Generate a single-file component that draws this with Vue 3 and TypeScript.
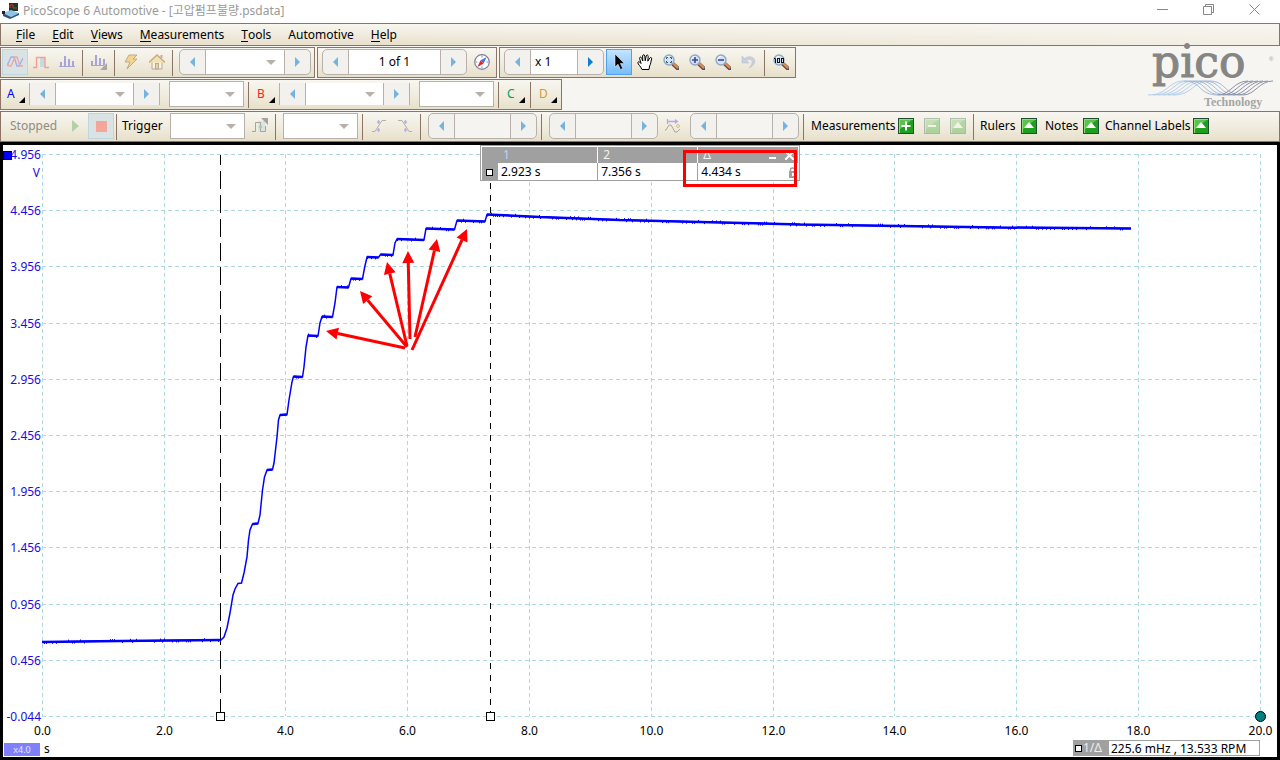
<script setup lang="ts">
import { computed, onBeforeUnmount, onMounted, ref } from 'vue'

interface Item {
  k: 'btn' | 'sep' | 'spin' | 'sel' | 'chan' | 'label'
  icon?: string
  text?: string
  cls?: string
  field?: 'select' | 'input'
  value?: string
}

const menus: [string, string][] = [
  ['F', 'ile'], ['E', 'dit'], ['V', 'iews'], ['M', 'easurements'],
  ['T', 'ools'], ['', 'Automotive'], ['H', 'elp'],
]

const lens = (inner: string) => `
  <path d="M9.6 9.6 L14.6 14.2" stroke="#5a4a5a" stroke-width="4" stroke-linecap="round"/>
  <path d="M9.8 9.2 L14.4 13.4" stroke="#e8893c" stroke-width="2.4" stroke-linecap="round"/>
  <circle cx="6" cy="6" r="5" fill="#cfe4f5" stroke="#8fa9c4" stroke-width="1.4"/>
  <path d="M2.6 5.4 A3.6 3.6 0 0 1 6 2.4" stroke="#fff" fill="none"/>${inner}`

const green = (inner: string) => `
  <rect x=".5" y=".5" width="15" height="15" fill="#1ea01e" stroke="#1f4d38"/>
  <path d="M1 1 H15 L1 12 Z" fill="#5cc34a"/>
  <path d="M1.5 15 V1.5 H15" stroke="#8fdc7c" fill="none"/>${inner}`

const icons: Record<string, string> = {
  wave: '<path d="M0 12 L4 3 H7 L10 12 H12 L16 4" stroke="#a3ade6" fill="none" stroke-width="1.3"/><path d="M0 9 L2 12 H4 L8 3 H10 L13 12 H16" stroke="#f0a8a2" fill="none" stroke-width="1.5"/>',
  step: '<rect x="7" y="4" width="5" height="9" fill="#c3dce0"/><path d="M0 13.5 H3.5 V3.5 H12 V13.5 H16" stroke="#f3a097" fill="none" stroke-width="1.4"/>',
  bars: '<path d="M0 12.5 H16" stroke="#a9a4d8"/><path d="M2 12 V8 M6 12 V2 M10 12 V5 M14 12 V7" stroke="#a9a4d8" stroke-width="2"/>',
  barsMenu: '<path d="M0 11.5 H13" stroke="#a9a4d8"/><path d="M1 11 V7 M5 11 V1 M9 11 V4 M13 11 V5" stroke="#a9a4d8" stroke-width="2"/><path d="M16 9 V16 H9 Z" fill="#aaa7a2"/>',
  bolt: '<path d="M6 1 L14 1 L10 5 H14 L4 15 L7 8 H2 Z" fill="#f3d58b" stroke="#b9ab92"/>',
  home: '<path d="M3 8 V15 H13 V8" fill="#f6f1e6" stroke="#b9ab92"/><path d="M0 8.5 L8 1 L16 8.5" fill="#f3e2ad" stroke="#c2ab80" stroke-width="1.3"/><rect x="6.5" y="9.5" width="3" height="5.5" fill="#e4d0a0" stroke="#b9ab92"/><path d="M12.5 1 V4" stroke="#d9a58f" stroke-width="2"/>',
  compass: '<circle cx="8" cy="8" r="7.3" fill="#fff" stroke="#7d7da5" stroke-width="1.2"/><path d="M8 1.5V3.5M8 12.5V14.5M1.5 8H3.5M12.5 8H14.5" stroke="#8888aa"/><path d="M12.6 3 L9.6 9.4 L6.4 6.6 Z" fill="#3e73e6"/><path d="M3.4 13 L6.4 6.6 L9.6 9.4 Z" fill="#e3242b"/>',
  cursor: '<path d="M4 0 V13 L7 10.2 L9.4 15.5 L11.8 14.4 L9.4 9.4 H13.4 Z" fill="#000" stroke="#dfeeff" stroke-width=".6"/>',
  hand: '<path d="M5 15.5 C3.5 12 1 10.5 .8 8.6 C1.2 7 3 8 4 9.5 L2.6 4.4 C2.6 2.6 4.2 2.8 4.7 4.2 L5.8 7 L5.6 2 C5.8 .2 7.6 .4 7.8 2 L8.2 6.8 L9.2 2 C9.8 .4 11.4 .9 11.2 2.6 L10.8 7.2 L12.8 4 C13.6 2.8 15 3.6 14.6 5 C13.8 8 13.8 10 12.6 12 L12 15.5 Z" fill="#fff" stroke="#000"/>',
  zoomBox: lens('<path d="M3.5 5 V3.5 H5 M7 3.5 H8.5 V5 M8.5 7 V8.5 H7 M5 8.5 H3.5 V7" stroke="#33506f" fill="none"/>'),
  zoomIn: lens('<path d="M3 6 H9 M6 3 V9" stroke="#4a3fa5" stroke-width="1.6"/>'),
  zoomOut: lens('<path d="M3 6 H9" stroke="#4a3fa5" stroke-width="1.6"/>'),
  zoom100: lens('<path d="M1 4.5 H2.5 V9" stroke="#111" fill="none"/><rect x="4.5" y="4.5" width="2" height="4" stroke="#111"/><rect x="8.5" y="4.5" width="2" height="4" stroke="#111"/>'),
  undo: '<path d="M1 2 V9 H8 L5.5 6.5 C9 4 12 6 11 9 C10.6 11 9.4 12.5 8 14 C12.5 12 15 8.5 13.5 5.5 C11.5 2 7 2 3.6 4.5 Z" fill="#c9d0dc" stroke="#b9c2d0" stroke-width=".6"/>',
  play: '<path d="M5 2 L12 8 L5 14 Z" fill="#b3d0a6"/>',
  stop: '<rect x="3" y="3" width="11" height="11" fill="#f4a69a"/>',
  pulse: '<rect x="6" y="3" width="7" height="11" fill="#dce3e2"/><path d="M0 13.5 H3.5 V4.5 H8.5 V13.5 H13.5 V8" stroke="#a5a39b" fill="none"/><circle cx="8.5" cy="9" r="1.8" fill="#9fd69a"/><path d="M9 0 H16 V7 Z" fill="#a5a39b"/>',
  rise: '<path d="M1 13.5 H4 L11 2.5 H15" stroke="#b5b0a6" fill="none"/><path d="M7.5 2 V6 M7.5 10 V14 M6 4 H9 M6 12 H9" stroke="#b6b0ee" stroke-width="1.3"/>',
  fall: '<path d="M1 2.5 H5 L12 13.5 H15" stroke="#b5b0a6" fill="none"/><path d="M8.5 2 V6 M8.5 10 V14 M7 4 H10 M7 12 H10" stroke="#b6b0ee" stroke-width="1.3"/>',
  advance: '<path d="M0 12 L1 12 L4 7 H6 L10 14 H12 L15 11" stroke="#a9a69d" fill="none"/><path d="M2.5 3.5 H11 M2.5 1 V6" stroke="#b0aaea" fill="none" stroke-width="1.3"/><path d="M10 1 L13.5 3.5 L10 6 Z" fill="#b0aaea"/><path d="M13 6 L15 8 L13 10 L11 8 Z" fill="#efe39a" stroke="#bdb7a5" stroke-width=".7"/>',
  plus: green('<path d="M8 3.5 V12.5 M3.5 8 H12.5" stroke="#fff" stroke-width="2"/>'),
  minus: green('<path d="M4 8 H12" stroke="#fff" stroke-width="2"/>'),
  up: green('<path d="M8 4 L13 10 H3 Z" fill="#fff"/>'),
}

const sep: Item = { k: 'sep' }
const btn = (icon: string, text: string, cls = ''): Item => ({ k: 'btn', icon, text, cls })

const topGroups: Item[][] = [
  [
    btn('wave', 'Scope mode', 'lit'), btn('step', 'Persistence mode'), btn('bars', 'Spectrum mode'), sep,
    btn('barsMenu', 'Spectrum options'), sep, btn('bolt', 'Auto setup'), btn('home', 'Home'), sep,
    { k: 'spin', field: 'select', text: 'Timebase', cls: 'w-timebase' },
  ],
  [
    { k: 'spin', field: 'input', value: '1 of 1', text: 'Buffer', cls: 'w-buffer center' },
    btn('compass', 'Buffer navigator'),
  ],
  [
    { k: 'spin', field: 'input', value: 'x 1', text: 'Zoom factor', cls: 'w-zoom' },
    btn('cursor', 'Select', 'active'), btn('hand', 'Pan'), btn('zoomBox', 'Zoom to area'),
    btn('zoomIn', 'Zoom in'), btn('zoomOut', 'Zoom out'), btn('undo', 'Undo zoom'), sep, btn('zoom100', 'Zoom 100%'),
  ],
]

const channelItems: Item[] = [
  { k: 'chan', text: 'A', cls: 'ch-a' },
  { k: 'spin', field: 'select', text: 'Channel A range', cls: 'w-range flat' },
  { k: 'sel', text: 'Channel A coupling' }, sep,
  { k: 'chan', text: 'B', cls: 'ch-b' },
  { k: 'spin', field: 'select', text: 'Channel B range', cls: 'w-range flat' },
  { k: 'sel', text: 'Channel B coupling' }, sep,
  { k: 'chan', text: 'C', cls: 'ch-c' }, sep,
  { k: 'chan', text: 'D', cls: 'ch-d' },
]

const triggerItems: Item[] = [
  { k: 'label', text: 'Stopped', cls: 'l-stopped' }, btn('play', 'Start'), btn('stop', 'Stop', 'lit'), sep,
  { k: 'label', text: 'Trigger', cls: 'l-trigger' }, { k: 'sel', text: 'Trigger mode' },
  btn('pulse', 'Advanced triggers'), sep,
  { k: 'sel', text: 'Trigger channel' }, sep, btn('rise', 'Rising edge'), btn('fall', 'Falling edge'), sep,
  { k: 'spin', field: 'input', value: '', text: 'Threshold', cls: 'w-level blank' }, sep,
  { k: 'spin', field: 'input', value: '', text: 'Pre-trigger', cls: 'w-level blank' },
  btn('advance', 'Post-trigger delay'),
  { k: 'spin', field: 'input', value: '', text: 'Delay', cls: 'w-level blank' }, sep,
  { k: 'label', text: 'Measurements', cls: 'l-measure' },
  btn('plus', 'Add measurement'), btn('minus', 'Delete measurement', 'dim'), btn('up', 'Edit measurement', 'dim'), sep,
  { k: 'label', text: 'Rulers', cls: 'l-rulers' }, btn('up', 'Show rulers'),
  { k: 'label', text: 'Notes', cls: 'l-notes' }, btn('up', 'Show notes'),
  { k: 'label', text: 'Channel Labels', cls: 'l-labels' }, btn('up', 'Show channel labels'),
]

const bars = [
  { id: 'top', groups: topGroups },
  { id: 'channels', groups: [channelItems] },
  { id: 'trigger', groups: [triggerItems] },
]

/* Samples are stored on a 1218 x 562 capture grid whose origin is (42, 154). */
const GRID = { x: 42, y: 154, w: 1218, h: 562 }
const PAD = { left: 39, right: 17, top: 9, bottom: 41 }

const samples: [number, number][] = [
  [42, 642], [80, 641.5], [120, 641], [170, 640.5], [221, 640], [224, 637], [227, 628], [230, 613], [233, 595],
  [235, 589], [238, 583.5], [241.5, 583], [244, 573], [247, 557], [248.5, 540], [250, 530], [252.5, 524],
  [258, 523.5], [260, 515], [262.5, 490], [264.5, 477], [267, 470], [272.5, 469.5], [274, 463], [277, 437],
  [278.5, 420], [280, 415], [287, 414.5], [289, 400], [292, 382], [293.5, 376.5], [302.5, 377], [304, 367],
  [306, 347], [308, 335.5], [318, 336], [320, 323], [322, 316.5], [332.5, 317], [335, 303], [337, 287],
  [348.5, 287.5], [351, 278.5], [362.5, 279], [364.5, 268], [367, 257], [378.5, 257.5], [380.5, 254.5],
  [393, 255], [395, 243], [397, 239], [424, 240], [426, 228.5], [454.5, 229.5], [457, 220.5], [485, 221.5],
  [487, 214.5], [540, 217], [620, 220], [700, 222], [800, 224.5], [900, 226], [1000, 227.5], [1131, 228.5],
]

const arrows = [
  [405, 348, 326, 331], [407, 347, 360, 291], [407, 346, 387, 262],
  [410, 339, 408, 251], [415, 337, 437, 239], [412, 350, 467, 229],
]

const volts = [4.956, 4.456, 3.956, 3.456, 2.956, 2.456, 1.956, 1.456, 0.956, 0.456, -0.044]
const seconds = [0, 2, 4, 6, 8, 10, 12, 14, 16, 18, 20]

const plot = ref<SVGSVGElement | null>(null)
const width = ref(1274)
const height = ref(612)
let observer: ResizeObserver | undefined

onMounted(() => {
  const measure = () => {
    if (!plot.value) return
    const box = plot.value.getBoundingClientRect()
    width.value = Math.round(box.width)
    height.value = Math.round(box.height)
  }
  measure()
  observer = new ResizeObserver(measure)
  if (plot.value) observer.observe(plot.value)
})
onBeforeUnmount(() => observer?.disconnect())

const right = computed(() => width.value - PAD.right)
const bottom = computed(() => height.value - PAD.bottom)
const px = (x: number) => PAD.left + ((x - GRID.x) / GRID.w) * (right.value - PAD.left)
const py = (y: number) => PAD.top + ((y - GRID.y) / GRID.h) * (bottom.value - PAD.top)
const gx = (i: number) => Math.round(PAD.left + (i / 10) * (right.value - PAD.left) - 0.2) + 0.5
const gy = (i: number) => Math.round(PAD.top + (i / 10) * (bottom.value - PAD.top)) + 0.5

const trace = computed(() => samples.map(([x, y]) => `${px(x)},${py(y)}`).join(' '))

const plateaus = computed(() => {
  let d = ''
  for (let i = 1; i < samples.length; i++) {
    const [x0, y0] = samples[i - 1]
    const [x1, y1] = samples[i]
    if (x1 - x0 > 4 && Math.abs(y1 - y0) < 4) d += `M${px(x0)} ${py(y0)}L${px(x1)} ${py(y1)}`
  }
  return d
})

const noise = computed(() => {
  let d = ''
  let seed = 7
  for (let i = 1; i < samples.length; i++) {
    const [x0, y0] = samples[i - 1]
    const [x1, y1] = samples[i]
    if (x1 - x0 < 9) continue
    for (let x = x0; x < x1; x += 2) {
      seed = (seed * 73 + 41) % 1009
      if (seed % 5 > 1) continue
      const y = y0 + ((x - x0) / (x1 - x0)) * (y1 - y0)
      const side = seed % 3 ? 2 : -2
      d += `M${Math.round(px(x)) + 0.5} ${py(y)}v${side}`
    }
  }
  return d
})

const arrowShapes = computed(() => arrows.map(([a, b, c, e]) => {
  const x0 = px(a), y0 = py(b), x1 = px(c), y1 = py(e)
  const len = Math.hypot(x1 - x0, y1 - y0)
  const ux = (x1 - x0) / len, uy = (y1 - y0) / len
  const bx = x1 - ux * 12, by = y1 - uy * 12
  return {
    shaft: `M${x0} ${y0}L${bx} ${by}`,
    head: `${x1},${y1} ${bx - uy * 6},${by + ux * 6} ${bx + uy * 6},${by - ux * 6}`,
  }
}))

const rulerA = computed(() => Math.round(px(220)) + 0.5)
const rulerB = computed(() => Math.round(px(490)) + 0.5)
const strands = [0, 1, 2, 3, 4, 5]
</script>

<template>
  <div class="app">
    <header class="titlebar">
      <svg class="app-icon" width="18" height="18" viewBox="0 0 18 18">
        <rect x="7" y="1" width="9" height="8" fill="#143c22" />
        <path d="M8 6 V3 H11 V6 H15" stroke="#e02a2a" fill="none" />
        <path d="M1 11 L9 8 L17 11 L9 15 Z" fill="#8cc4ec" />
        <path d="M1 11 L9 15 L17 11 V13 L8 17 L1 14 Z" fill="#2d5577" />
        <rect x="0" y="9" width="3" height="3" fill="#222" />
      </svg>
      <h1>PicoScope 6 Automotive - [고압펌프불량.psdata]</h1>
      <div class="window-buttons">
        <button type="button" aria-label="Minimize"><svg width="11" height="11"><path d="M0 5.5H11" /></svg></button>
        <button type="button" aria-label="Restore"><svg width="11" height="11"><path d="M.5 2.5H8.5V10.5H.5ZM2.5 2.5V.5H10.5V8.5H8.5" /></svg></button>
        <button type="button" aria-label="Close"><svg width="11" height="11"><path d="M.5 .5L10.5 10.5M10.5 .5L.5 10.5" /></svg></button>
      </div>
    </header>

    <nav class="menubar">
      <button v-for="m in menus" :key="m[1]" type="button"><span v-if="m[0]" class="key">{{ m[0] }}</span>{{ m[1] }}</button>
    </nav>

    <section class="toolbars">
      <div v-for="bar in bars" :key="bar.id" class="bar" :class="bar.id">
        <div v-for="(group, g) in bar.groups" :key="g" class="group">
          <template v-for="(item, i) in group" :key="i">
            <i v-if="item.k === 'sep'" class="sep" />
            <button v-else-if="item.k === 'btn'" type="button" class="tool" :class="item.cls" :aria-label="item.text">
              <svg width="16" height="16" viewBox="0 0 16 16" fill="none" v-html="icons[item.icon ?? '']" />
            </button>
            <button v-else-if="item.k === 'chan'" type="button" class="channel" :class="item.cls">
              <span>{{ item.text }}</span>
              <svg width="6" height="6"><path d="M6 0V6H0Z" fill="#000" /></svg>
            </button>
            <span v-else-if="item.k === 'label'" class="label" :class="item.cls">{{ item.text }}</span>
            <span v-else-if="item.k === 'sel'" class="select boxed">
              <select :aria-label="item.text"><option /></select>
            </span>
            <span v-else class="spin" :class="item.cls">
              <button type="button" :aria-label="item.text + ' down'"><svg width="5" height="10"><path d="M5 0V10L0 5Z" /></svg></button>
              <span v-if="item.field === 'select'" class="select">
                <select :aria-label="item.text"><option /></select>
              </span>
              <input v-else type="text" :value="item.value" :aria-label="item.text">
              <button type="button" :aria-label="item.text + ' up'"><svg width="5" height="10"><path d="M0 0V10L5 5Z" /></svg></button>
            </span>
          </template>
        </div>
      </div>
      <svg class="logo" width="132" height="76" viewBox="0 -14 132 76" role="img" aria-label="pico Technology">
        <text x="4" y="28" class="logo-name">pico</text>
        <text x="121" y="12" class="logo-mark">®</text>
        <g fill="none" stroke-width="1">
          <path v-for="n in strands" :key="'a' + n" :d="`M${n * 5} 46 C${n * 5 + 20} 46 ${n * 5 + 20} 32 ${n * 5 + 36} 32`" stroke="#b3cfec" />
          <path v-for="n in strands" :key="'b' + n" :d="`M${n * 5 + 36} 32 C${n * 5 + 54} 32 ${n * 5 + 50} 46 ${n * 5 + 70} 46`" stroke="#a3b8d6" />
          <path v-for="n in strands" :key="'c' + n" :d="`M${n * 5 + 70} 46 C${n * 5 + 82} 46 ${n * 5 + 86} 32 ${n * 5 + 100} 32`" stroke="#8b91a6" />
        </g>
        <text x="56" y="57" class="logo-sub">Technology</text>
      </svg>
    </section>

    <main class="scope">
      <svg ref="plot" class="plot" role="img" aria-label="Voltage over time">
        <g class="grid">
          <path v-for="(v, i) in volts" :key="v" :d="`M${PAD.left} ${gy(i)}H${right}`" />
          <path v-for="(s, i) in seconds" :key="s" :d="`M${gx(i)} ${PAD.top}V${bottom}`" />
        </g>
        <g class="volt-labels">
          <text v-for="(v, i) in volts" :key="v" x="38" :y="gy(i) + 4">{{ v.toFixed(3) }}</text>
          <text x="37" y="32">V</text>
        </g>
        <g class="time-labels">
          <text v-for="(s, i) in seconds" :key="s" :x="gx(i)" :y="bottom + 19">{{ s.toFixed(1) }}</text>
        </g>
        <rect class="channel-handle" x="0.5" y="6.5" width="8" height="8" />
        <path class="ruler long" :d="`M${rulerA} 10V${bottom - 4}`" />
        <path class="ruler short" :d="`M${rulerB} 38V${bottom - 4}`" />
        <polyline class="trace" :points="trace" />
        <path class="trace thick" :d="plateaus" />
        <path class="trace noise" :d="noise" />
        <g v-for="(a, i) in arrowShapes" :key="i" class="arrow">
          <path :d="a.shaft" />
          <polygon :points="a.head" />
        </g>
        <rect class="knob" :x="rulerA - 4" :y="bottom - 4 + 0.5" width="8" height="8" />
        <rect class="knob" :x="rulerB - 4" :y="bottom - 4 + 0.5" width="8" height="8" />
        <circle class="time-knob" :cx="right + 0.5" :cy="bottom + 0.5" r="5" />
      </svg>

      <div class="legend">
        <table>
          <thead>
            <tr>
              <th class="pin" /><th class="first">1</th><th>2</th>
              <th>
                <span class="delta-head">Δ
                  <span class="legend-tools">
                    <button type="button" aria-label="Minimize rulers"><svg width="9" height="9"><path d="M1 7H8" stroke="#fff" stroke-width="2" /></svg></button>
                    <button type="button" aria-label="Close rulers"><svg width="9" height="9"><path d="M0 0L9 9M9 0L0 9" stroke="#fff" stroke-width="2" /></svg></button>
                  </span>
                </span>
              </th>
            </tr>
          </thead>
          <tbody>
            <tr>
              <td class="pin"><i class="pin-box" /></td><td>2.923 s</td><td>7.356 s</td>
              <td>
                <span class="delta-head">4.434 s
                  <svg width="8" height="11"><rect x="0" y="4" width="8" height="7" fill="#a0a0a0" /><path d="M1.5 5V2.5C1.5 .5 6 .5 6 2.5" stroke="#a0a0a0" fill="none" stroke-width="1.5" /><rect x="3" y="6" width="2" height="3" fill="#fff" /></svg>
                </span>
              </td>
            </tr>
          </tbody>
        </table>
        <div class="highlight" />
      </div>

      <div class="scale"><span class="factor">x4.0</span><span>s</span></div>
      <div class="frequency">
        <span class="freq-key"><i class="pin-box" />1/Δ</span>
        <span class="freq-value">225.6 mHz , 13.533 RPM</span>
      </div>
    </main>
  </div>
</template>

<style>
body { margin: 0; background: #f6f5f2; }
</style>

<style scoped>
.app {
  display: flex;
  flex-direction: column;
  height: 100vh;
  min-height: 480px;
  overflow: hidden;
  background: #f6f5f2;
  color: #000;
  font: 12px/16px "Noto Sans", "Noto Sans CJK KR", sans-serif;
}
.app *, .app *::after { box-sizing: border-box; }
button, input, select { font: inherit; color: inherit; margin: 0; padding: 0; border: 0; background: none; border-radius: 0; }

.titlebar { display: flex; align-items: center; height: 23px; padding: 0 0 2px 2px; background: #fff; color: #999; }
.app-icon { margin-right: 3px; }
h1 { flex: 1; margin: 0; font-size: 12px; font-weight: 400; }
.window-buttons { display: flex; padding-right: 3px; }
.window-buttons button { width: 46px; height: 20px; }
.window-buttons svg { fill: none; stroke: #888; }

.menubar {
  display: flex;
  gap: 1px;
  height: 23px;
  padding: 0 7px;
  border: 1px solid #8b7366;
  background: linear-gradient(100deg, #e9e1cd00 30%, #f7f5efaa 95%), linear-gradient(#f8f6ef, #e8e0cc);
}
.menubar button { padding: 0 8px; }
.key { display: inline-block; height: 15px; border-bottom: 1px solid #000; }

.toolbars { position: relative; display: flex; flex-direction: column; gap: 1px; padding-top: 1px; }
.bar { display: flex; gap: 2px; }
.group {
  display: flex;
  align-items: center;
  height: 31px;
  padding: 0 1px 1px;
  border: 1px solid #8b7366;
  background: linear-gradient(#f8f6f0, #f0ebdd 55%, #e7dfca);
}
.trigger .group { flex: 1; padding: 0 0 1px; }
.sep { flex: none; align-self: stretch; width: 1px; margin: 2px 3px 0 2px; background: #8b7366; }
.tool { flex: none; display: flex; align-items: center; justify-content: center; width: 26px; height: 26px; }
.tool.lit { background: #dae3e3; border: 1px solid #bdd6df; }
.tool.active { background: linear-gradient(#c4e4ff, #78bdfb); border: 1px solid #4fa3ee; }
.tool.dim svg { opacity: 0.3; }

.spin {
  display: flex;
  flex: none;
  height: 26px;
  margin: 0 2px 0 3px;
  border: 1px solid #b8b1ab;
  border-radius: 5px;
  background: #f3f1ed;
  overflow: hidden;
}
.spin button { flex: none; display: flex; align-items: center; justify-content: center; width: 25px; }
.spin button path { fill: #74b4de; }
.spin input, .spin .select { flex: 1; min-width: 0; background: #fff; border: solid #b8b1ab; border-width: 0 1px; }
.spin input { padding: 0 4px; }
.spin.center input { text-align: center; }
.spin.blank input { background: #f5f4f1; }
.w-timebase { width: 132px; }
.w-buffer { width: 145px; }
.w-zoom { width: 100px; }
.w-zoom button:last-child path { fill: #0a7fd8; }
.w-range { width: 131px; }
.w-level { width: 109px; }
.trigger .spin { margin-left: 4px; }
.spin.flat { height: 22px; margin: 0 9px 0 1px; border-width: 0 1px; border-radius: 0; }

.select { position: relative; display: block; }
.select select { width: 100%; height: 100%; appearance: none; }
.select::after {
  content: "";
  position: absolute;
  top: calc(50% - 2px);
  right: 8px;
  border: 5px solid transparent;
  border-top-color: #b8b1ab;
  border-bottom: 0;
  pointer-events: none;
}
.select.boxed { flex: none; width: 75px; height: 26px; margin-right: 2px; border: 1px solid #b8b1ab; background: #fff; }
.trigger .select.boxed { margin-left: 4px; }

.channel { display: flex; flex: none; width: 26px; height: 26px; padding-left: 5px; align-items: center; }
.channel span { width: 12px; text-align: left; }
.channel svg { align-self: flex-end; margin-bottom: 4px; }
.ch-a { color: #00f; }
.ch-b { color: #f22; }
.ch-c { color: #00a060; }
.ch-d { color: #d29a32; }

.label { flex: none; white-space: nowrap; }
.l-stopped { width: 61px; padding-left: 9px; color: #8f8b84; }
.l-trigger { width: 46px; padding-left: 2px; }
.l-measure { width: 86px; padding-left: 4px; }
.l-rulers { width: 39px; padding-left: 3px; }
.l-notes { width: 36px; padding-left: 3px; }
.l-labels { width: 84px; padding-left: 1px; }

.logo { position: absolute; top: -11px; right: 0; pointer-events: none; }
.logo-name { font: 44px "DejaVu Serif", serif; fill: #858585; stroke: #858585; stroke-width: 1px; }
.logo-mark { font: 6px "Liberation Sans", sans-serif; fill: #999; }
.logo-sub { font: bold 12px "Liberation Serif", serif; fill: #a5a5a5; }

.scope { position: relative; flex: 1; min-height: 0; border: 3px solid #000; background: #fff; }
.plot { display: block; width: 100%; height: 100%; }
.grid path { stroke: #add8e6; stroke-dasharray: 4 3; fill: none; }
.volt-labels text { fill: #1a0ce0; text-anchor: end; }
.time-labels text { text-anchor: middle; }
.channel-handle { fill: #00f; stroke: #000; }
.ruler { stroke: #000; fill: none; }
.ruler.long { stroke-dasharray: 18 6; stroke-dashoffset: 8; }
.ruler.short { stroke-dasharray: 6 6; }
.trace { fill: none; stroke: #00f; stroke-width: 1.5px; }
.trace.thick { stroke-width: 2.5px; }
.trace.noise { stroke-width: 1px; }
.arrow path { stroke: #f00; stroke-width: 3px; fill: none; }
.arrow polygon { fill: #f00; }
.knob { fill: #fff; stroke: #000; }
.time-knob { fill: #008080; stroke: #000; }

.legend { position: absolute; left: 477px; top: 0; width: 320px; height: 36px; padding: 1px; border: 1px solid #a0a0a0; background: #fff; }
table { width: 100%; border-collapse: collapse; table-layout: fixed; line-height: 16px; }
th, td { height: 16px; padding: 0 0 0 3px; text-align: left; font-weight: 400; border-left: 1px solid #a0a0a0; }
td { padding-top: 1px; }
th { padding-left: 5px; background: #a0a0a0; color: #f2f2f2; border-left-color: #fff; }
th.first, .pin { border-left-color: #a0a0a0; }
th.first { color: #c3d2ee; }
.pin { width: 15px; background: #a0a0a0; }
.pin-box { display: block; width: 7px; height: 7px; border: 1px solid #000; background: #fff; }
.delta-head { display: flex; justify-content: space-between; align-items: center; padding-right: 1px; }
.legend-tools { display: flex; gap: 8px; padding-right: 3px; }
.legend-tools button { display: flex; }
.highlight { position: absolute; left: 202px; top: 4px; width: 114px; height: 37px; border: 3px solid #f00; }

.scale { position: absolute; left: 1px; bottom: 0; display: flex; gap: 4px; align-items: center; }
.factor { width: 36px; height: 13px; background: #8080ff; color: #e6e6ff; font-size: 9px; line-height: 13px; text-align: center; }
.frequency { position: absolute; right: 17px; bottom: 1px; display: flex; height: 16px; line-height: 16px; border: 1px solid #a0a0a0; }
.freq-key { display: flex; align-items: center; gap: 1px; width: 35px; padding-left: 1px; background: #a0a0a0; color: #eee; }
.freq-value { width: 150px; padding-left: 2px; white-space: nowrap; }
</style>
